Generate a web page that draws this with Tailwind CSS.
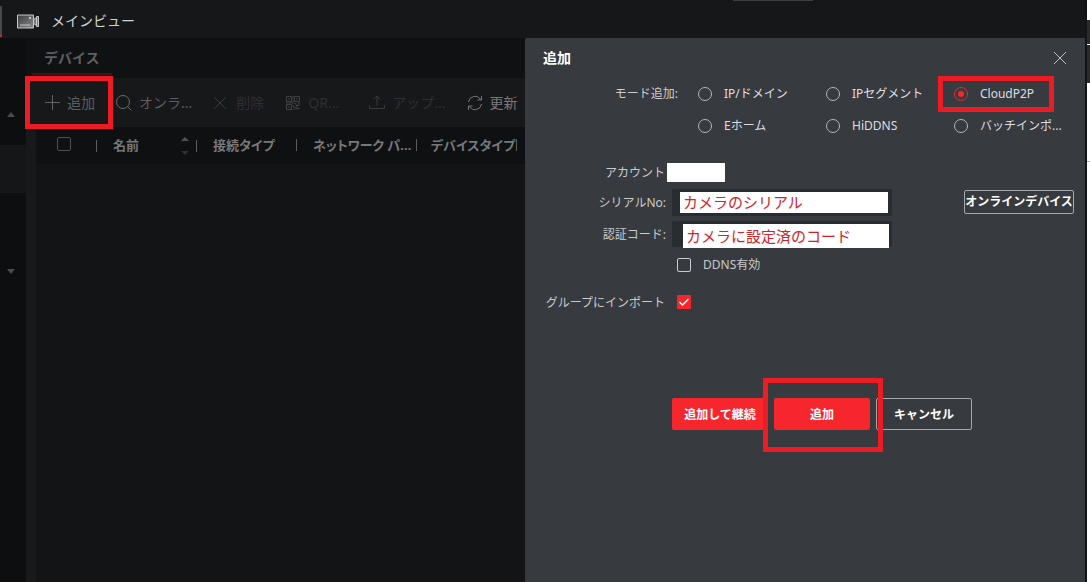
<!DOCTYPE html>
<html lang="ja">
<head>
<meta charset="UTF-8">
<meta name="viewport" content="width=device-width, initial-scale=1.0">
<title>メインビュー</title>
<script src="https://cdn.jsdelivr.net/npm/@tailwindcss/browser@4"></script>
</head>
<body class="bg-[#151618] font-['Noto_Sans','Noto_Sans_CJK_JP',sans-serif] text-xs text-[#c9cbcd]">

<div class="flex min-h-screen">
  <div class="flex min-w-0 flex-1 flex-col">

    <!-- Title bar -->
    <header class="relative flex h-[38px] items-center gap-[11px] bg-[#151719] pl-4 pt-1">
      <div class="absolute left-0 top-[6px] h-[31px] w-[2px] border-b-2 border-[#d0282e] bg-[#46484a]"></div>
      <div class="absolute right-[272px] top-0 h-px w-[80px] bg-[#3c3e40]"></div>
      <svg class="h-[15px] w-6" viewBox="0 0 24 15" fill="none" stroke="#c4c6c8">
        <defs>
          <linearGradient id="body" x1="0" y1="0" x2="1" y2="1"><stop stop-color="#3a3b3d"/><stop offset="1" stop-color="#8a8c8e"/></linearGradient>
        </defs>
        <path d="M1.5 1h16v13h-16z" fill="url(#body)"/>
        <path d="M17.5 5.5l3-2v8l-3-2z" fill="#77797b"/>
        <path d="M20.5 2.500h2v10h-2z" fill="#77797b"/>
        <path d="M4 11h10"/>
        <path d="M13 4h2" stroke-width="2"/>
      </svg>
      <h1 class="text-sm text-[#d2d3d4]">メインビュー</h1>
    </header>

    <div class="flex flex-1">
      <!-- Sidebar -->
      <aside class="flex w-[26px] shrink-0 flex-col bg-[#0d0e10]">
        <div class="flex h-[107px] items-end pb-7 pl-[7px]">
          <svg class="h-[5px] w-2" viewBox="0 0 8 5" fill="#4a4b4d"><path d="M0 5L4 0l4 5z"/></svg>
        </div>
        <div class="h-12 bg-[#151618]"></div>
        <div class="flex h-[84px] items-end pb-[3px] pl-[7px]">
          <svg class="h-[5px] w-2" viewBox="0 0 8 5" fill="#4a4b4d"><path d="M0 0h8L4 5z"/></svg>
        </div>
      </aside>

      <!-- Device list -->
      <main class="flex min-w-0 flex-1 flex-col bg-[#18191b]">
        <nav class="h-10 bg-[#101113] pl-[6px]">
          <a href="#" class="block h-[37px] w-20 border-b-2 border-[#451417] pl-3 text-sm font-bold leading-[40px] text-[#5e5f61]">デバイス</a>
        </nav>
        <div class="relative flex h-[49px] items-center gap-[21px] whitespace-nowrap bg-[#17181a] pl-[18px] text-sm text-[#5c5d5f]">
          <button class="flex shrink-0 items-center gap-[7px]">
            <svg class="size-4" viewBox="0 0 16 16" fill="none" stroke="#626365"><path d="M8.500 0v15M1 7.500h15"/></svg>追加
          </button>
          <button class="flex shrink-0 items-center gap-[7px]">
            <svg class="size-4" viewBox="0 0 16 16" fill="none" stroke="#6a6b6d"><circle cx="7" cy="7" r="6.500"/><path d="M11.500 11.500l4 4"/></svg>オンラ...
          </button>
          <button class="flex shrink-0 items-center gap-[7px] text-[#2e2f31]" disabled>
            <svg class="size-4" viewBox="0 0 16 16" fill="none" stroke="#38393b"><path d="M1 2l12 12M13 2L1 14"/></svg>削除
          </button>
          <button class="flex w-[63px] shrink-0 items-center gap-[7px] text-[#2e2f31]" disabled>
            <svg class="size-4" viewBox="0 0 16 16" fill="none" stroke="#3f4042">
              <path d="M1.500 1.500h5v5h-5zM9.500 1.500h5v5h-5zM1.500 9.500h5v5h-5zM3 4h2M11 4h2M3 12h2"/>
              <path d="M8 1v3M8 5v3h-7M9 8.500h2v2h3v-2M8 10v2h2v2h2v-3M12 13.500h3M8 14v1M13 8h2"/>
            </svg>QR...
          </button>
          <button class="flex shrink-0 items-center gap-[7px] text-[#2e2f31]" disabled>
            <svg class="size-4" viewBox="0 0 16 16" fill="none" stroke="#3a3b3d"><path d="M8 11V1M4.500 4.500L8 1l3.500 3.500M.5 10v3.500h15V10"/></svg>アップ...
          </button>
          <button class="flex shrink-0 items-center gap-[7px] text-[#77787a]">
            <svg class="size-4" viewBox="0 0 16 16" fill="none" stroke="#77787a"><path d="M1.500 7A6.500 6.500 0 0 1 13.500 4.500M14.500 1v4h-4M14.500 9A6.500 6.500 0 0 1 2.500 11.500M1.500 15v-4h4"/></svg>更新
          </button>
          <div class="pointer-events-none absolute -left-px -top-[2px] h-[53px] w-[88px] border-5 border-[#ec1c24]"></div>
        </div>
        <div class="ml-[10px] flex-1 bg-[#131416]">
          <div class="bg-[#0f1011]">
            <table class="w-[481px] table-fixed text-left text-[13px] text-[#77787a] [font-feature-settings:'palt']">
              <thead>
                <tr class="h-[37px] whitespace-nowrap">
                  <th class="w-[61px]"><div class="flex items-center justify-between pl-[21px]"><input type="checkbox" aria-label="すべて選択" class="mb-1 size-[14px] appearance-none rounded-xs border border-[#4d4e50]"><span class="h-3 w-px bg-[#5c5d5f]"></span></div></th>
                  <th class="w-[100px]"><div class="flex items-center pl-4"><span class="flex-1">名前</span>
                    <svg class="mr-[7px] h-[18px] w-2" viewBox="0 0 8 18"><path d="M0 4L4 0l4 4z" fill="#4f5052"/><path d="M0 14h8l-4 4z" fill="#303133"/></svg>
                    <span class="h-3 w-px bg-[#5c5d5f]"></span></div></th>
                  <th class="w-[100px]"><div class="flex items-center justify-between pl-4">接続タイプ<span class="h-3 w-px bg-[#5c5d5f]"></span></div></th>
                  <th class="w-[120px]"><div class="flex items-center justify-between pl-4">ネットワーク パ...<span class="h-3 w-px bg-[#5c5d5f]"></span></div></th>
                  <th class="w-[100px]"><div class="flex items-center justify-between pl-[14px]">デバイスタイプ<span class="h-3 w-px bg-[#5c5d5f]"></span></div></th>
                </tr>
              </thead>
            </table>
          </div>
        </div>
      </main>

      <!-- Add device panel -->
      <section class="w-[560px] shrink-0 rounded-tl-xs bg-[#373a3e]">
        <div class="flex h-10 items-center justify-between pl-[18px] pr-[18px]">
          <h2 class="text-sm font-bold text-white">追加</h2>
          <button aria-label="閉じる">
            <svg class="size-[14px]" viewBox="0 0 14 14" fill="none" stroke="#bcbec0"><path d="M1 1l12 12M13 1L1 13"/></svg>
          </button>
        </div>

        <form>
          <fieldset class="relative grid grid-cols-[173px_128px_128px_1fr] auto-rows-[32px] items-center">
            <div class="pr-5 text-right">モード追加:</div>
            <label class="flex items-center gap-3 whitespace-nowrap text-[#dedfe0]"><input type="radio" name="mode" class="size-[14px] appearance-none rounded-full border border-[#b4b6b8]">IP/ドメイン</label>
            <label class="flex items-center gap-3 whitespace-nowrap text-[#dedfe0]"><input type="radio" name="mode" class="size-[14px] appearance-none rounded-full border border-[#b4b6b8]">IPセグメント</label>
            <label class="relative flex items-center gap-3 whitespace-nowrap text-[#dedfe0]"><input type="radio" name="mode" checked class="grid size-[14px] appearance-none place-items-center rounded-full border border-[#e8292f] before:size-[6px] before:rounded-full before:bg-[#f5262c] before:content-['']">CloudP2P
              <span class="pointer-events-none absolute -left-4 -top-[10px] h-9 w-[116px] border-5 border-[#ec1c24]"></span></label>
            <label class="col-start-2 flex items-center gap-3 whitespace-nowrap text-[#dedfe0]"><input type="radio" name="mode" class="size-[14px] appearance-none rounded-full border border-[#b4b6b8]">Eホーム</label>
            <label class="flex items-center gap-3 whitespace-nowrap text-[#dedfe0]"><input type="radio" name="mode" class="size-[14px] appearance-none rounded-full border border-[#b4b6b8]">HiDDNS</label>
            <label class="flex items-center gap-3 whitespace-nowrap text-[#dedfe0]"><input type="radio" name="mode" class="size-[14px] appearance-none rounded-full border border-[#b4b6b8]">バッチインポ...</label>
          </fieldset>

          <div class="mt-[21px] flex h-[19px] items-center">
            <label for="account" class="w-[140px] pt-px text-right">アカウント</label>
            <input id="account" type="text" class="ml-[2px] h-[19px] w-[58px] bg-white">
          </div>

          <div class="mt-[7px] flex h-[26px] items-center">
            <label for="serial" class="w-[141px] pt-px text-right">シリアルNo:</label>
            <div class="ml-[6px] w-[220px] rounded-xs bg-[#292c30] py-[3px] pl-2 pr-1">
              <input id="serial" type="text" value="カメラのシリアル" class="block h-[21px] w-full bg-white pb-[2px] pl-[3px] text-[15px] text-[#d0242b]">
            </div>
            <button type="button" class="ml-auto mr-[11px] h-6 w-[110px] whitespace-nowrap rounded-xs border border-[#a5a7a9] font-bold text-white">オンラインデバイス</button>
          </div>

          <div class="mt-[6px] flex h-[26px] items-center">
            <label for="code" class="w-[141px] pt-px text-right">認証コード:</label>
            <div class="ml-[6px] h-[26px] w-[220px] rounded-xs bg-[#292c30] pl-[11px] pr-[3px] pt-[3px]">
              <input id="code" type="text" value="カメラに設定済のコード" class="block h-6 w-full bg-white pb-[2px] pl-[3px] text-[15px] text-[#d0242b]">
            </div>
          </div>

          <label class="ml-[152px] mt-[9px] flex h-[18px] w-fit items-center gap-3"><input type="checkbox" class="size-[14px] appearance-none rounded-xs border border-[#c9cbcd]">DDNS有効</label>

          <div class="mt-[19px] flex h-[18px] items-center">
            <label for="group" class="w-[140px] pt-px text-right">グループにインポート</label>
            <div class="ml-3 grid size-[14px]">
              <input id="group" type="checkbox" checked class="col-start-1 row-start-1 size-[14px] appearance-none rounded-[1px] bg-[#f5262c]">
              <svg class="pointer-events-none col-start-1 row-start-1 size-[14px]" viewBox="0 0 14 14" fill="none" stroke="#fff" stroke-width="1.500"><path d="M2.500 7l3 3 6-6"/></svg>
            </div>
          </div>

          <div class="ml-[147px] mt-[87px] flex gap-[6px] font-bold text-white">
            <button type="button" class="h-8 w-24 rounded-xs bg-[#f5262c] pt-px">追加して継続</button>
            <div class="relative">
              <button type="submit" class="h-8 w-24 rounded-xs bg-[#f5262c] pt-px">追加</button>
              <div class="pointer-events-none absolute -left-[11px] -top-5 z-10 h-[74px] w-[120px] border-5 border-[#ec1c24]"></div>
            </div>
            <button type="button" class="h-8 w-24 rounded-xs border border-[#a5a7a9] pt-px">キャンセル</button>
          </div>
        </form>
      </section>
    </div>
  </div>

  <!-- Window edge -->
  <div class="w-[2px] bg-[#121618]"></div>
  <div class="flex w-[3px] flex-col bg-white">
    <div class="mt-5 h-6 bg-[#2a2b2d]"></div>
    <div class="mt-px h-[38px] bg-[#2a2b2d]"></div>
    <div class="mt-[78px] h-px bg-[#b4b4b4]"></div>
  </div>
</div>

</body>
</html>
